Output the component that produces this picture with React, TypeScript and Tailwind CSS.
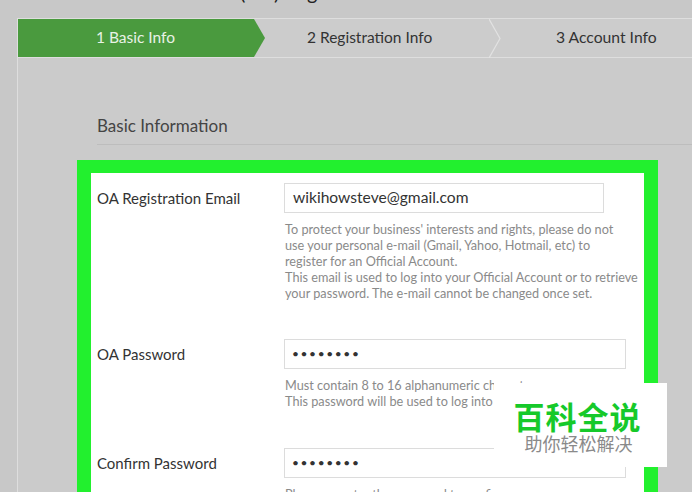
import React from "react";

const font = { fontFamily: "Lato, 'Open Sans', sans-serif" };

function Field({
  label,
  value,
  inputWidth,
  help,
  mono,
}: {
  label: string;
  value: string;
  inputWidth: string;
  help: string[];
  mono?: boolean;
}) {
  return (
    <div className="flex">
      <div className="w-[193px] pl-[6px] h-[30px] flex items-center text-[15px] text-[#333]">{label}</div>
      <div className="flex flex-col">
        <div
          className={`${inputWidth} h-[30px] border border-[#dcdcdc] bg-white flex items-center text-[#333] ${
            mono ? "pl-[7px] text-[12px] tracking-[1.6px]" : "pl-[8px] text-[15.6px]"
          }`}
        >
          {value}
        </div>
        <div className="mt-[8px] pl-[1px] text-[12.7px] leading-[16px] text-[#8a8a8a]">
          {help.map((h, i) => (
            <div key={i} className="whitespace-nowrap">
              {h}
            </div>
          ))}
        </div>
      </div>
    </div>
  );
}

export default function App() {
  return (
    <div className="w-[692px] h-[492px] overflow-hidden bg-[#c8c8c8] relative" style={font}>
      <div className="h-[18px] overflow-hidden">
        <div className="pl-[95px] -mt-[21px] text-[20px] leading-[26px] text-[#222] whitespace-nowrap">
          Official Account (OA) Registration
        </div>
      </div>
      <div className="ml-[17px] border-l border-t border-[#dedede] bg-[#cbcbcb] h-[500px]">
        <div className="flex items-center h-[39px] border-b border-[#dedede] bg-[#cccccc]">
          <div className="w-[247px] h-full bg-[#4a9a3e] flex items-center pl-[78px] text-[15.5px] text-[#e8f2e6] [clip-path:polygon(0_0,calc(100%-11px)_0,100%_50%,calc(100%-11px)_100%,0_100%)]">
            1 Basic Info
          </div>
          <div className="w-[224px] h-full flex items-center pl-[42px] text-[15.5px] text-[#333]">
            2 Registration Info
          </div>
          <svg width="12" height="39" viewBox="0 0 12 39" className="shrink-0">
            <polyline points="0,0 11,19.5 0,39" fill="none" stroke="#e2e2e2" strokeWidth="1.2" />
          </svg>
          <div className="h-full flex items-center pl-[55px] text-[15.7px] text-[#333]">3 Account Info</div>
        </div>
        <div className="pl-[79px] pt-[57px] text-[17px] text-[#444] leading-[22px]">Basic Information</div>
        <div className="ml-[79px] mt-[7px] border-t border-[#bdbdbd]" />
        <div className="ml-[59px] mt-[15px] w-[581px] border-[14px] border-t-[13px] border-[#22f02e] border-b-0 bg-white h-[400px] pt-[10px]">
          <Field
            label="OA Registration Email"
            value="wikihowsteve@gmail.com"
            inputWidth="w-[320px]"
            help={[
              "To protect your business' interests and rights, please do not",
              "use your personal e-mail (Gmail, Yahoo, Hotmail, etc) to",
              "register for an Official Account.",
              "This email is used to log into your Official Account or to retrieve",
              "your password. The e-mail cannot be changed once set.",
            ]}
          />
          <div className="h-[38px]" />
          <Field
            label="OA Password"
            value="••••••••"
            inputWidth="w-[342px]"
            mono
            help={[
              "Must contain 8 to 16 alphanumeric characters.",
              "This password will be used to log into your Official Account.",
            ]}
          />
          <div className="h-[39px]" />
          <Field
            label="Confirm Password"
            value="••••••••"
            inputWidth="w-[342px]"
            mono
            help={["Please re-enter the password to confirm."]}
          />
        </div>
      </div>
      <div className="absolute left-[494px] top-[383px] w-[173px] h-[84px] bg-white flex flex-col items-center pt-[16px]">
        <div
          className="text-[31px] leading-[34px] font-bold text-[#16c92a] tracking-[1px] -ml-[6px]"
          style={{ fontFamily: "'Noto Sans CJK SC', sans-serif" }}
        >
          百科全说
        </div>
        <div
          className="text-[18px] leading-[22px] text-[#8a8a8a] -mt-[1px] -ml-[4px]"
          style={{ fontFamily: "'Noto Sans CJK SC', sans-serif" }}
        >
          助你轻松解决
        </div>
      </div>
    </div>
  );
}
